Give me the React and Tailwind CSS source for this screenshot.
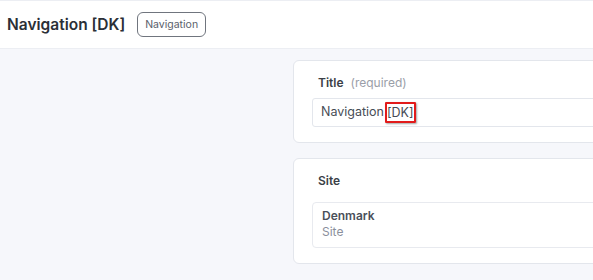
import React from "react";

function Card({ children, className = "" }) {
  return (
    <div
      className={
        "w-[420px] rounded-md border border-[#e3e6ec] bg-white px-[18px] " +
        className
      }
    >
      {children}
    </div>
  );
}

export default function App() {
  return (
    <div
      className="h-[280px] w-[593px] overflow-hidden bg-[#f6f7fb]"
      style={{ fontFamily: "Inter, 'Liberation Sans', sans-serif" }}
    >
      {/* header */}
      <div className="flex h-[49px] items-center gap-3 border-t border-b border-[#eceef3] bg-white pl-[7px]">
        <h1 className="text-[15.5px] font-semibold text-[#2b2f36]">
          Navigation [DK]
        </h1>
        <span className="rounded-md border border-[#70757e] px-[7px] py-[5px] text-[10.5px] leading-[13px] text-[#5a606b]">
          Navigation
        </span>
      </div>

      <div className="flex">
        <div className="w-[293px] shrink-0" />
        <div className="flex flex-col gap-[15px] pt-[11px]">
          <Card className="pt-[14px] pb-[15px]">
            <div className="flex items-center gap-[7px] pl-[6px] text-[12px] leading-4">
              <span className="font-semibold text-[#3b3f47]">Title</span>
              <span className="text-[#9a9ea8]">(required)</span>
            </div>
            <div className="mt-[7px] flex h-[29px] items-center rounded-[3px] border border-[#e3e6ec] pl-2 text-[12.5px] text-[#474c55]">
              <span>Navigation</span>
              <span className="ml-[1px] rounded-[1px] border-2 border-[#e21b1b] leading-[17px] shadow-[1px_1px_2px_rgba(0,0,0,0.35)]">
                [DK]
              </span>
            </div>
          </Card>

          <Card className="pt-[14px] pb-[15px]">
            <div className="pl-[6px] text-[12px] font-semibold leading-4 text-[#3b3f47]">
              Site
            </div>
            <div className="mt-[13px] rounded-[4px] border border-[#e8eaef] pt-[5px] pb-[7px] pl-[9px] text-[12px] leading-4">
              <div className="font-semibold text-[#4a4f5a]">Denmark</div>
              <div className="text-[#8a8f9c]">Site</div>
            </div>
          </Card>
        </div>
      </div>
    </div>
  );
}
